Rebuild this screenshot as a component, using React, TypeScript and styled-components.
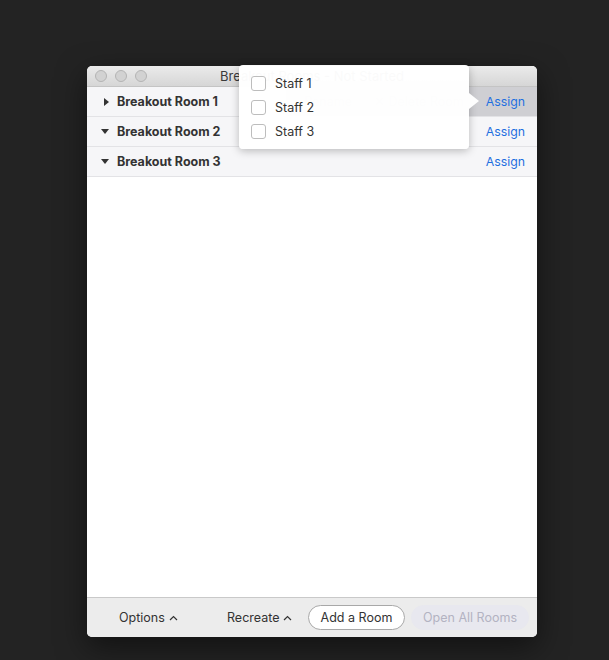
import React from "react";
import styled, { createGlobalStyle } from "styled-components";

const Global = createGlobalStyle`
  html, body { margin: 0; padding: 0; background: #232323; }
  body { font-family: Inter, "Noto Sans", sans-serif; -webkit-font-smoothing: antialiased; }
`;

const Page = styled.div`
  width: 609px;
  height: 660px;
  padding: 66px 0 0 87px;
  box-sizing: border-box;
`;

const Window = styled.div`
  position: relative;
  width: 450px;
  height: 571px;
  border-radius: 5px;
  background: #ffffff;
  display: flex;
  flex-direction: column;
  box-shadow: 0 10px 30px rgba(0, 0, 0, 0.5);
`;

const TitleBar = styled.div`
  height: 20px;
  flex: none;
  display: flex;
  align-items: center;
  padding-left: 8px;
  border-radius: 5px 5px 0 0;
  background: linear-gradient(#ebebeb, #d6d6d6);
  border-bottom: 1px solid #c4c4c4;
  position: relative;
`;

const Lights = styled.div`
  display: flex;
  gap: 8px;
`;

const Light = styled.span`
  width: 12px;
  height: 12px;
  border-radius: 50%;
  background: #d2d2d2;
  border: 1px solid #b4b4b4;
  box-sizing: border-box;
`;

const Title = styled.div`
  position: absolute;
  left: 0;
  right: 0;
  top: 0;
  bottom: 0;
  display: flex;
  align-items: center;
  justify-content: center;
  font-size: 13px;
  color: #3a3a3a;
`;

const Row = styled.div`
  height: 29px;
  flex: none;
  display: flex;
  align-items: center;
  background: #f6f6f8;
  border-bottom: 1px solid #e3e3e6;
`;

const Caret = styled.span<{ $open: boolean }>`
  width: 0;
  height: 0;
  ${(p) =>
    p.$open
      ? `border-left: 4px solid transparent; border-right: 4px solid transparent; border-top: 5px solid #333; margin: 0 8px 0 14px;`
      : `border-top: 4px solid transparent; border-bottom: 4px solid transparent; border-left: 5px solid #333; margin: 0 8px 0 17px;`}
`;

const RoomName = styled.span`
  font-size: 12.5px;
  font-weight: 700;
  color: #333;
  flex: 1;
`;

const Actions = styled.div<{ $hover: boolean }>`
  align-self: stretch;
  display: flex;
  align-items: center;
  gap: 22px;
  padding: 0 12px 0 18px;
  background: ${(p) => (p.$hover ? "#cfcfd3" : "transparent")};
`;

const Faint = styled.span`
  font-size: 12.5px;
  color: #9a9aa0;
`;

const Assign = styled.span`
  font-size: 12.3px;
  color: #1f6fe0;
`;

const Body = styled.div`
  flex: 1;
  background: #fff;
`;

const Footer = styled.div`
  height: 39px;
  flex: none;
  border-top: 1px solid #c9c9c9;
  background: #ececec;
  border-radius: 0 0 5px 5px;
  display: flex;
  align-items: center;
  padding: 0 8px 0 32px;
  font-size: 12.5px;
  color: #333;
`;

const Menu = styled.span<{ $w: number }>`
  width: ${(p) => p.$w}px;
  flex: none;
  display: flex;
  align-items: center;
  gap: 4px;
  white-space: nowrap;
`;

const Pill = styled.button<{ $disabled?: boolean; $w: number }>`
  flex: none;
  width: ${(p) => p.$w}px;
  height: 25px;
  border-radius: 13px;
  font-family: inherit;
  font-size: 12.5px;
  padding: 0;
  white-space: nowrap;
  margin-right: 6px;
  background: ${(p) => (p.$disabled ? "#e8e8ef" : "#fff")};
  color: ${(p) => (p.$disabled ? "#b3b3c2" : "#333")};
  border: ${(p) => (p.$disabled ? "1px solid #e8e8ef" : "1px solid #a8a8a8")};
`;

const Popup = styled.div`
  position: absolute;
  left: 152px;
  top: -1px;
  width: 230px;
  height: 84px;
  background: rgba(255, 255, 255, 0.975);
  border-radius: 4px;
  box-shadow: 0 2px 8px rgba(0, 0, 0, 0.25);
  box-sizing: border-box;
  padding: 6px 0 0 12px;
  display: flex;
  flex-direction: column;
  &::after {
    content: "";
    position: absolute;
    right: -10px;
    top: 28px;
    border-top: 8px solid transparent;
    border-bottom: 8px solid transparent;
    border-left: 10px solid rgba(255, 255, 255, 0.975);
  }
`;

const Item = styled.label`
  height: 24px;
  display: flex;
  align-items: center;
  gap: 9px;
  font-size: 12.5px;
  color: #333;
`;

const Box = styled.span`
  width: 15px;
  height: 15px;
  border: 1px solid #bdbdbd;
  border-radius: 3px;
  background: #fff;
  box-sizing: border-box;
`;

const Chevron = () => (
  <svg width="9" height="6" viewBox="0 0 9 6" fill="none">
    <path d="M1 5 L4.5 1.5 L8 5" stroke="#333" strokeWidth="1.2" />
  </svg>
);

export default function App() {
  return (
    <Page>
      <Global />
      <Window>
        <TitleBar>
          <Lights>
            <Light />
            <Light />
            <Light />
          </Lights>
          <Title>Breakout Rooms - Not Started</Title>
        </TitleBar>
        <Row>
          <Caret $open={false} />
          <RoomName>Breakout Room 1</RoomName>
          <Actions $hover>
            <Faint>Rename</Faint>
            <Faint>✕ Delete Room</Faint>
            <Assign>Assign</Assign>
          </Actions>
        </Row>
        <Row>
          <Caret $open />
          <RoomName>Breakout Room 2</RoomName>
          <Actions $hover={false}>
            <Assign>Assign</Assign>
          </Actions>
        </Row>
        <Row>
          <Caret $open />
          <RoomName>Breakout Room 3</RoomName>
          <Actions $hover={false}>
            <Assign>Assign</Assign>
          </Actions>
        </Row>
        <Body />
        <Footer>
          <Menu $w={108}>
            Options <Chevron />
          </Menu>
          <Menu $w={81}>
            Recreate <Chevron />
          </Menu>
          <Pill $w={97}>Add a Room</Pill>
          <Pill $w={118} $disabled>
            Open All Rooms
          </Pill>
        </Footer>
        <Popup>
          <Item>
            <Box />
            Staff 1
          </Item>
          <Item>
            <Box />
            Staff 2
          </Item>
          <Item>
            <Box />
            Staff 3
          </Item>
        </Popup>
      </Window>
    </Page>
  );
}
